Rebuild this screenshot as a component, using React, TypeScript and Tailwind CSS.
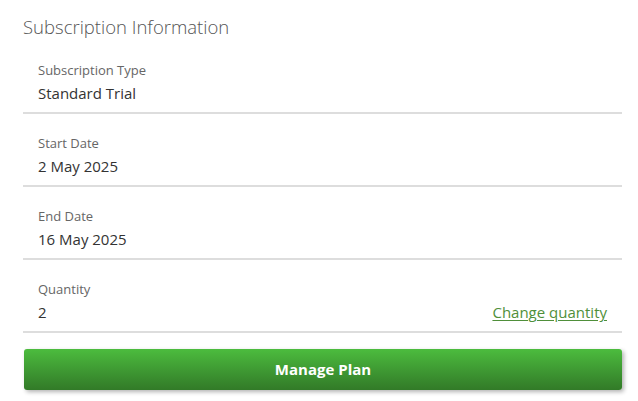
import React from "react"

const font = { fontFamily: '"Open Sans", "Noto Sans", Arial, sans-serif' }

function Row({ label, value, action }: { label: string; value: string; action?: string }) {
  return (
    <div className="border-b-2 border-[#dddddd] pl-[15px] pr-[15px] pt-[20px] pb-[8px]">
      <div className="text-[13px] leading-[18px] text-[#666666]">{label}</div>
      <div className="mt-[3px] flex items-center justify-between">
        <span className="text-[15px] leading-[22px] text-[#333333]">{value}</span>
        {action && (
          <a href="#" className="text-[15px] leading-[22px] text-[#4f8f3a] underline underline-offset-2">
            {action}
          </a>
        )}
      </div>
    </div>
  )
}

export default function App() {
  return (
    <div className="w-[638px] h-[401px] bg-white px-[23px]" style={font}>
      <h2 className="pt-[14px] mb-[1px] text-[18.5px] leading-[26px] font-light text-[#555555]">Subscription Information</h2>
      <div className="w-[599px]">
        <Row label="Subscription Type" value="Standard Trial" />
        <Row label="Start Date" value="2 May 2025" />
        <Row label="End Date" value="16 May 2025" />
        <Row label="Quantity" value="2" action="Change quantity" />
        <button className="mt-[16px] ml-[1px] w-[598px] h-[41px] rounded-[3px] bg-gradient-to-b from-[#4cbc3e] to-[#327a28] text-white text-[15px] font-bold shadow-[2px_2px_4px_rgba(0,0,0,0.3)]">
          Manage Plan
        </button>
      </div>
    </div>
  )
}
